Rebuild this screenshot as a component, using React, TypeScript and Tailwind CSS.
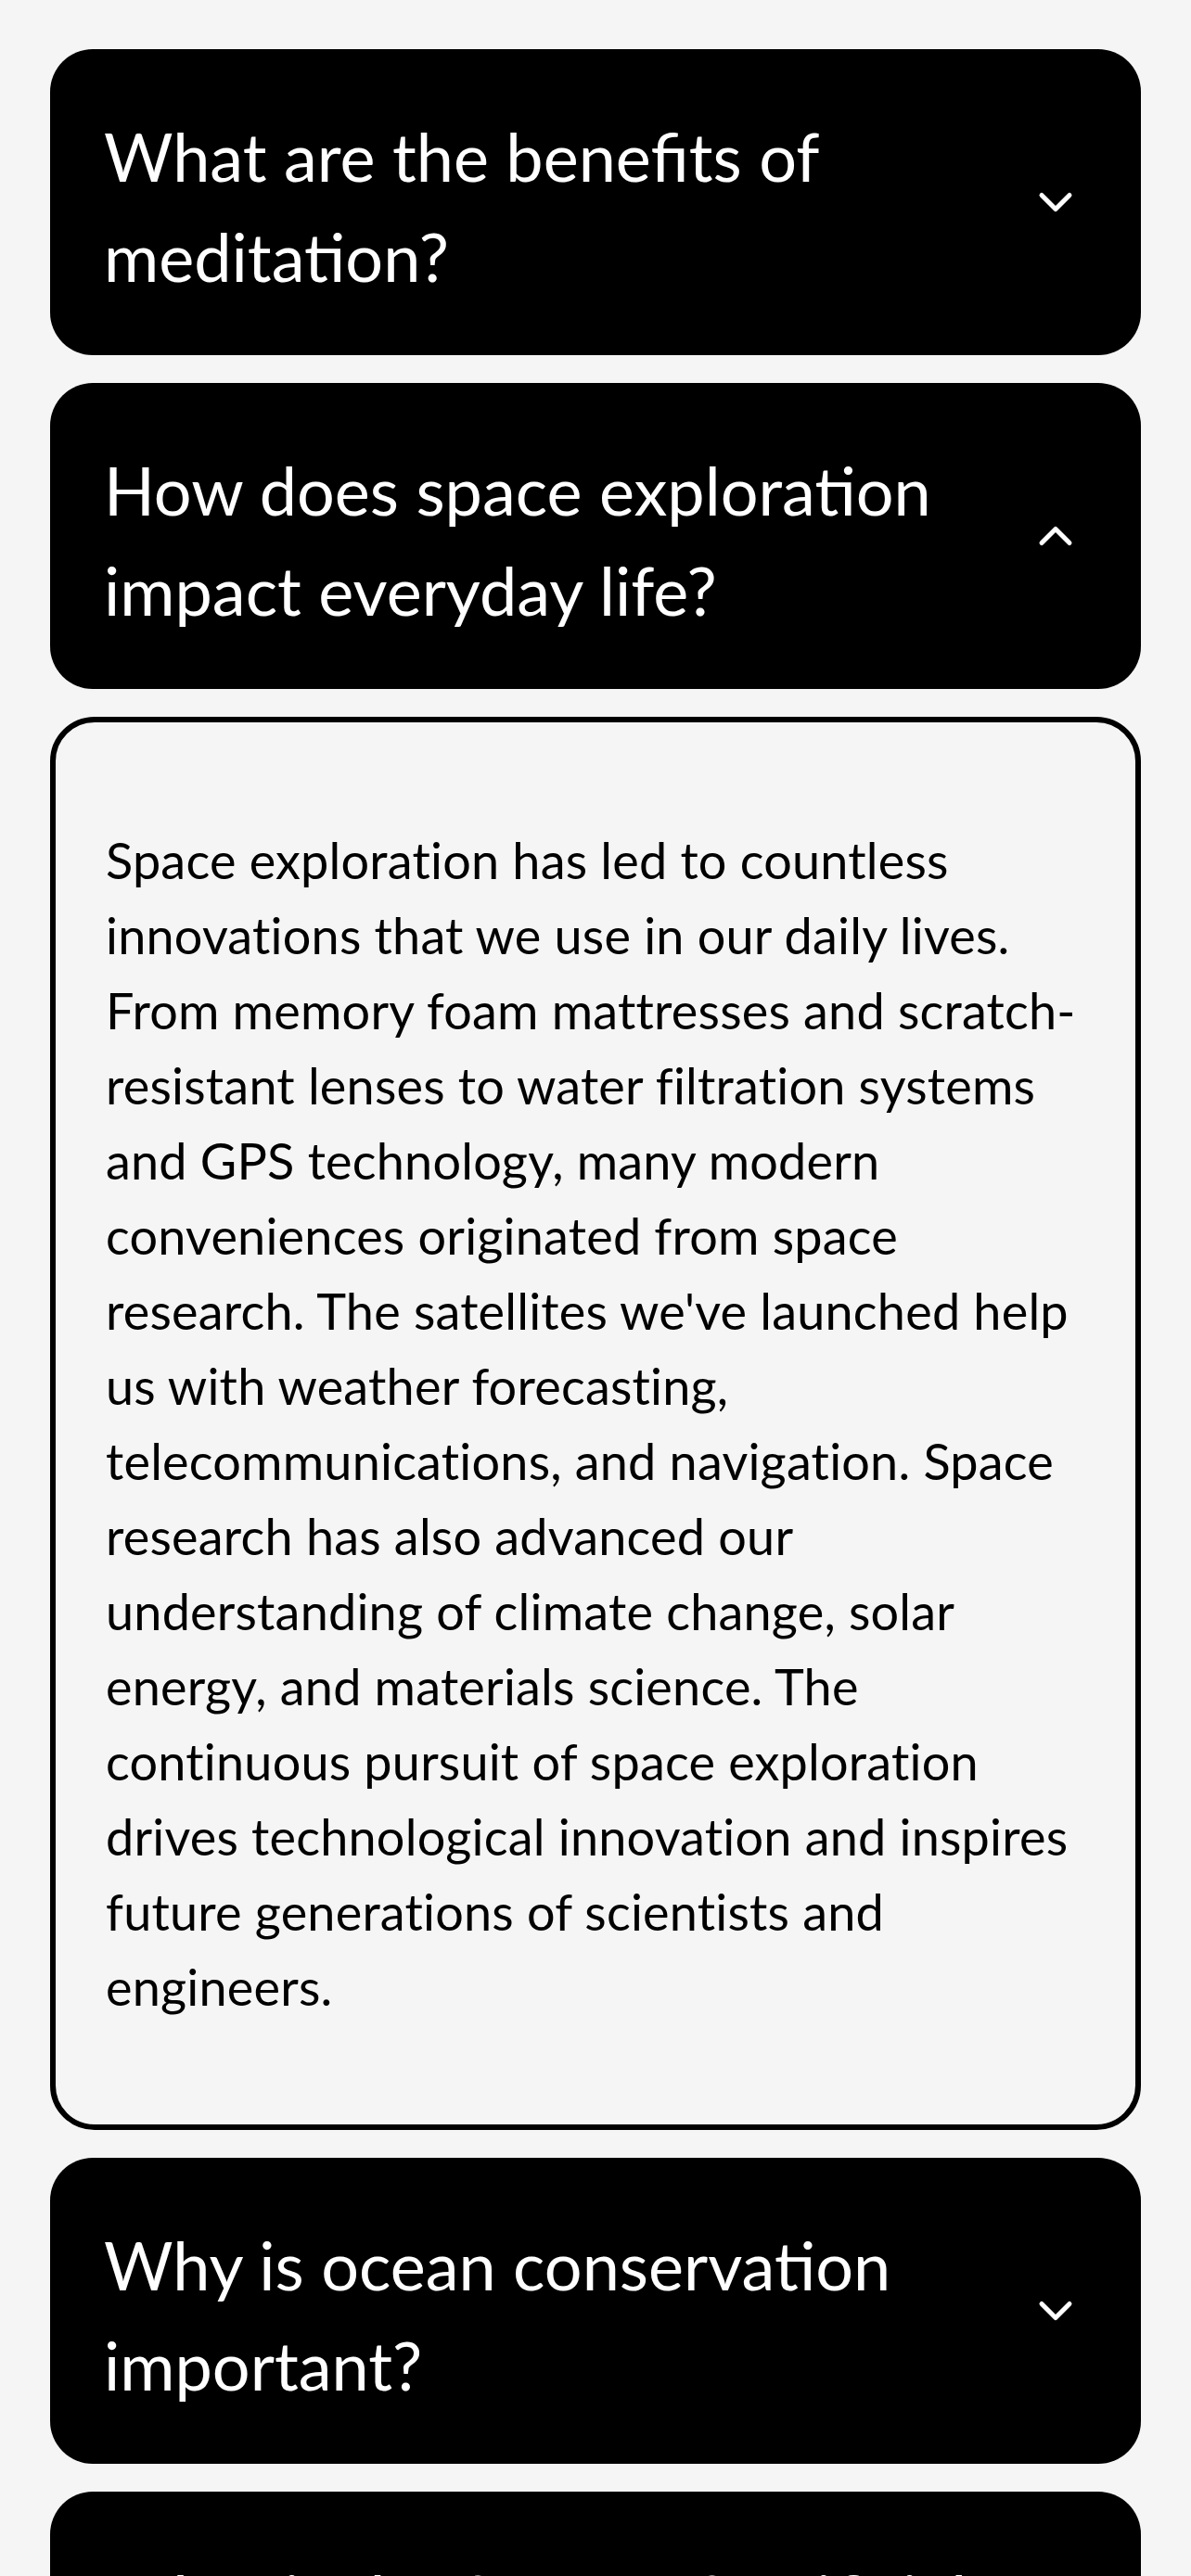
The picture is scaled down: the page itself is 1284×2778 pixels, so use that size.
import React, { useState } from 'react';
import { ChevronDown, ChevronUp } from 'lucide-react';

const faqs = [
  {
    question: 'What are the benefits of meditation?',
    answer:
      'Meditation can reduce stress, improve concentration, support emotional health and help you build a calmer, more focused daily routine.',
  },
  {
    question: 'How does space exploration impact everyday life?',
    answer:
      "Space exploration has led to countless innovations that we use in our daily lives. From memory foam mattresses and scratch-resistant lenses to water filtration systems and GPS technology, many modern conveniences originated from space research. The satellites we've launched help us with weather forecasting, telecommunications, and navigation. Space research has also advanced our understanding of climate change, solar energy, and materials science. The continuous pursuit of space exploration drives technological innovation and inspires future generations of scientists and engineers.",
  },
  {
    question: 'Why is ocean conservation important?',
    answer:
      'Oceans regulate the climate, produce much of the oxygen we breathe and support an enormous variety of life that people depend on.',
  },
  {
    question: 'What is the future of artificial intelligence?',
    answer:
      'Artificial intelligence will keep changing how we work, learn and communicate, which makes careful and responsible development important.',
  },
];

export default function App() {
  const [open, setOpen] = useState<number | null>(1);

  return (
    <div className="min-h-screen bg-[#f5f5f5] px-[54px] pt-[53px] pb-[54px] font-['Lato',sans-serif]">
      <div className="flex flex-col gap-[30px]">
        {faqs.map((faq, i) => (
          <React.Fragment key={faq.question}>
            <button
              type="button"
              onClick={() => setOpen(open === i ? null : i)}
              className="flex w-full items-center justify-between gap-[24px] rounded-[46px] bg-black pl-[58px] pr-[62px] pt-[61px] pb-[53px] text-left"
            >
              <span className="flex-1 text-[72px] leading-[108px] text-white">{faq.question}</span>
              {open === i ? (
                <ChevronUp size={60} strokeWidth={2} className="-mt-[8px] shrink-0 text-white" />
              ) : (
                <ChevronDown size={60} strokeWidth={2} className="-mt-[8px] shrink-0 text-white" />
              )}
            </button>
            {open === i && (
              <div className="rounded-[48px] border-[6px] border-black px-[54px] py-[54px]">
                <p className="my-[54px] text-[54px] leading-[81px] tracking-[0.2px] text-black">{faq.answer}</p>
              </div>
            )}
          </React.Fragment>
        ))}
      </div>
    </div>
  );
}
